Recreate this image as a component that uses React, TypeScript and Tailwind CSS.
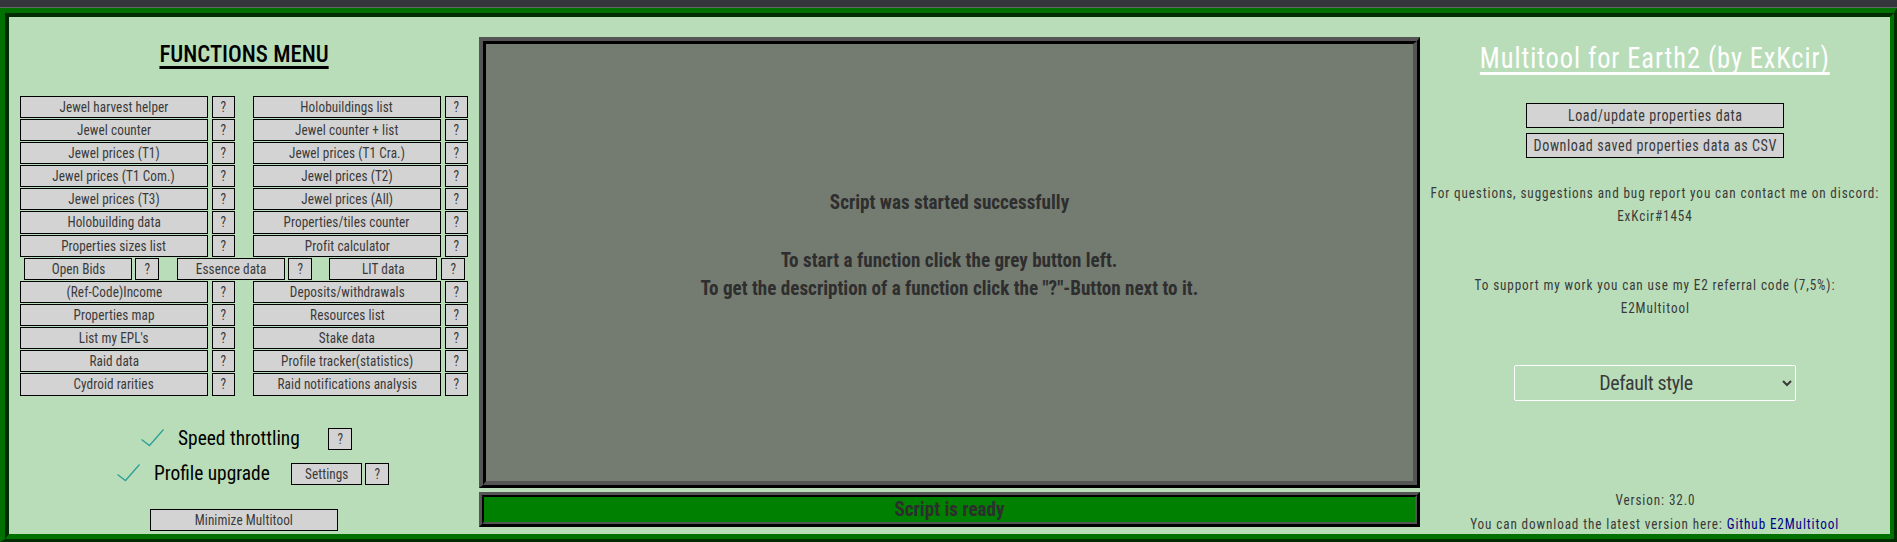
const font = "font-['Roboto_Condensed',Roboto,sans-serif]";

const btn =
  "flex items-center justify-center border border-black bg-[#d3d3d3] text-[#3a3a3a] leading-none";

const ROWS: [string, string][] = [
  ["Jewel harvest helper", "Holobuildings list"],
  ["Jewel counter", "Jewel counter + list"],
  ["Jewel prices (T1)", "Jewel prices (T1 Cra.)"],
  ["Jewel prices (T1 Com.)", "Jewel prices (T2)"],
  ["Jewel prices (T3)", "Jewel prices (All)"],
  ["Holobuilding data", "Properties/tiles counter"],
  ["Properties sizes list", "Profit calculator"],
];

const ROWS_2: [string, string][] = [
  ["(Ref-Code)Income", "Deposits/withdrawals"],
  ["Properties map", "Resources list"],
  ["List my EPL's", "Stake data"],
  ["Raid data", "Profile tracker(statistics)"],
  ["Cydroid rarities", "Raid notifications analysis"],
];

// no condensed face is installed, so squeeze regular Roboto
function Label({ children }: { children: React.ReactNode }) {
  return (
    <span className="inline-block whitespace-nowrap text-[15px] tracking-[0.1px] scale-x-[0.88]">{children}</span>
  );
}

function Btn({ label, className }: { label: string; className: string }) {
  return (
    <button className={`${btn} ${className}`}>
      <Label>{label}</Label>
    </button>
  );
}

function FnPair({ left, right, tall }: { left: string; right: string; tall?: boolean }) {
  const h = tall ? "h-[23px]" : "h-[22px]";
  return (
    <div className="flex mb-px">
      <Btn label={left} className={`${h} w-[188px]`} />
      <Btn label="?" className={`${h} w-[23px] ml-[4px]`} />
      <Btn label={right} className={`${h} w-[188px] ml-[18px]`} />
      <Btn label="?" className={`${h} w-[23px] ml-[4px]`} />
    </div>
  );
}

function Check() {
  return (
    <svg viewBox="0 0 24 20" fill="none" className="w-[24px] h-[20px] shrink-0">
      <path d="M0.5 10.5L8.5 16.5L22.5 0.5" stroke="#2aa198" strokeWidth="1.3" />
    </svg>
  );
}

const bigBold = "whitespace-nowrap text-[21px] font-bold scale-x-[0.91]";
const info = "whitespace-nowrap text-[15px] tracking-[1px] scale-x-[0.88] leading-[23px]";

export default function App() {
  return (
    <div className={`h-[542px] w-[1897px] overflow-hidden bg-[#35363c] ${font}`}>
      <div className="h-[8px] border-b border-[#666]" />
      <div className="h-[534px] border-t-[5px] border-l-[5px] border-r-[3px] border-b-[3px] border-t-[#007000] border-l-[#007000] border-r-[#002d00] border-b-[#002d00]">
        <div className="h-full border-t-[4px] border-l-[4px] border-r-[4px] border-b-[5px] border-t-[#002d00] border-l-[#002d00] border-r-[#007000] border-b-[#007000] bg-[#b9ddb9] grid grid-cols-[470px_941px_470px]">
          {/* left menu */}
          <div className="flex flex-col">
            <h2 className="mt-[21px] self-center whitespace-nowrap text-[24px] leading-[32px] font-medium text-black underline decoration-[3px] underline-offset-[4px] [text-decoration-skip-ink:none] scale-x-[0.95]">
              FUNCTIONS MENU
            </h2>
            <div className="mt-[26px] pl-[11px]">
              {ROWS.map(([l, r], i) => (
                <FnPair key={l} left={l} right={r} tall={i === 5} />
              ))}
              <div className="flex mb-px pl-[4px]">
                <Btn label="Open Bids" className="h-[22px] w-[108px]" />
                <Btn label="?" className="h-[22px] w-[24px] ml-[3px]" />
                <Btn label="Essence data" className="h-[22px] w-[108px] ml-[18px]" />
                <Btn label="?" className="h-[22px] w-[24px] ml-[3px]" />
                <Btn label="LIT data" className="h-[22px] w-[108px] ml-[17px]" />
                <Btn label="?" className="h-[22px] w-[24px] ml-[4px]" />
              </div>
              {ROWS_2.map(([l, r], i) => (
                <FnPair key={l} left={l} right={r} tall={i === 4} />
              ))}
            </div>
            <div className="mt-[31px] flex items-center pl-[132px] h-[22px] text-black">
              <Check />
              <span className="ml-[13px] w-[150px] -mt-[2px] whitespace-nowrap text-[20px] origin-left scale-x-[0.97]">Speed throttling</span>
              <Btn label="?" className="h-[22px] w-[24px]" />
            </div>
            <div className="mt-[13px] flex items-center pl-[108px] h-[22px] text-black">
              <Check />
              <span className="ml-[13px] w-[137px] -mt-[2px] whitespace-nowrap text-[20px] origin-left scale-x-[0.97]">Profile upgrade</span>
              <Btn label="Settings" className="h-[22px] w-[71px]" />
              <Btn label="?" className="h-[22px] w-[24px] ml-[3px]" />
            </div>
            <Btn label="Minimize Multitool" className="h-[22px] w-[188px] mt-[24px] self-center" />
          </div>

          {/* output + status */}
          <div className="flex flex-col pt-[20px]">
            <div className="h-[451px] border-t-[4px] border-l-[4px] border-r-[3px] border-b-[3px] border-t-[#555] border-l-[#555] border-r-black border-b-black">
              <div className="h-full border-t-[3px] border-l-[3px] border-r-[4px] border-b-[4px] border-t-black border-l-black border-r-[#555] border-b-[#555] bg-[#747b71] flex flex-col items-center justify-center pb-[36px] leading-[28px] text-[#2e2e2e]">
                <p className={bigBold}>Script was started successfully</p>
                <p className={`${bigBold} mt-[30px]`}>To start a function click the grey button left.</p>
                <p className={bigBold}>To get the description of a function click the "?"-Button next to it.</p>
              </div>
            </div>
            <div className="mt-[4px] h-[35px] border-[3px] border-t-[#555] border-l-[#555] border-r-black border-b-black">
              <div className="h-full border-[2px] border-t-black border-l-black border-r-[#555] border-b-[#555] bg-[#008000] flex items-center justify-center text-[#2e2e2e]">
                <span className={bigBold}>Script is ready</span>
              </div>
            </div>
          </div>

          {/* right info */}
          <div className="flex flex-col items-center text-[#3a3a3a]">
            <h1 className="mt-[21px] whitespace-nowrap text-[30px] leading-[40px] font-normal tracking-[1.05px] text-white underline decoration-[3px] underline-offset-[4px] [text-decoration-skip-ink:none] scale-x-[0.88]">
              Multitool for Earth2 (by ExKcir)
            </h1>
            <button className={`${btn} mt-[25px] w-[258px] h-[25px]`}>
              <span className="inline-block whitespace-nowrap text-[16px] tracking-[0.67px] scale-x-[0.88]">Load/update properties data</span>
            </button>
            <button className={`${btn} mt-[5px] w-[258px] h-[25px]`}>
              <span className="inline-block whitespace-nowrap text-[16px] tracking-[0.67px] scale-x-[0.88]">Download saved properties data as CSV</span>
            </button>
            <p className={`${info} mt-[24px]`}>For questions, suggestions and bug report you can contact me on discord:</p>
            <p className={info}>ExKcir#1454</p>
            <p className={`${info} mt-[46px]`}>To support my work you can use my E2 referral code (7,5%):</p>
            <p className={info}>E2Multitool</p>
            <select className="mt-[45px] w-[282px] h-[36px] border border-white rounded-[2px] bg-transparent text-center pr-[6px] text-[20px] tracking-[-0.4px] text-[#3a3a3a]">
              <option>Default style</option>
            </select>
            <p className={`${info} mt-[88px]`}>Version: 32.0</p>
            <p className={`${info} !leading-[25px]`}>
              You can download the latest version here: <a className="text-[#00008b]">Github E2Multitool</a>
            </p>
          </div>
        </div>
      </div>
    </div>
  );
}
